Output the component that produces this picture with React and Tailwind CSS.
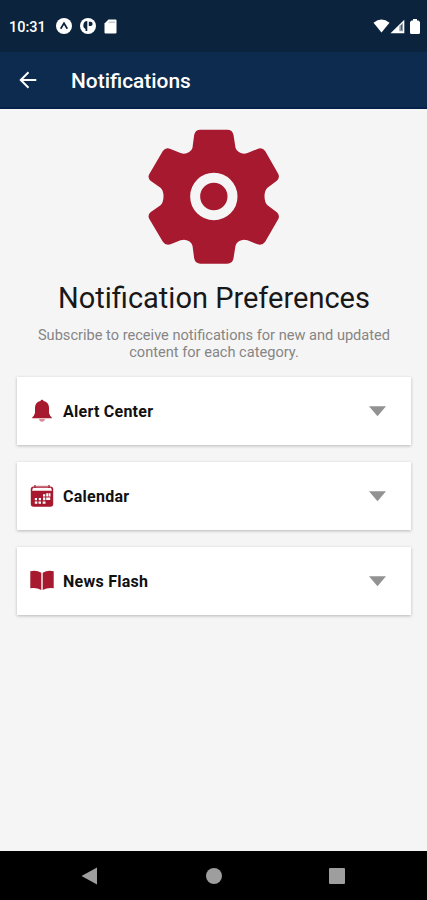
const categories = [
  { id: "alert", label: "Alert Center", icon: BellIcon },
  { id: "calendar", label: "Calendar", icon: CalendarIcon },
  { id: "news", label: "News Flash", icon: BookIcon }
];

function GearIcon() {
  return (
    <svg viewBox="-2.5 0 510 480" className="h-[160px] w-[170px]" aria-hidden="true">
      <path
        fill="#a6192e"
        d="M212 44H292Q308 44 311 60L317 98Q319 106 327 111Q339 119 353 114L383 102Q397 96 406 108L445 176Q451 188 441 197L413 218Q404 226 404 244Q404 262 413 271L441 292Q451 301 445 313L406 380Q397 393 383 388L353 376Q339 371 327 379Q319 384 317 392L311 430Q308 446 292 446H212Q196 446 193 430L188 392Q186 384 178 379Q166 371 152 376L122 388Q108 393 99 380L59 313Q52 301 62 292L92 271Q101 262 101 244Q101 226 92 218L62 197Q52 188 59 176L99 108Q108 96 122 102L152 114Q166 119 178 111Q186 106 188 98L193 60Q196 44 212 44Z"
      />
      <circle cx="252" cy="244.5" r="56" fill="none" stroke="#f5f5f5" strokeWidth="30" />
    </svg>
  );
}

function BellIcon() {
  return (
    <svg viewBox="0 0 24 24" className="size-6" aria-hidden="true">
      <path
        fill="#a6192e"
        d="M12 .7c-.9 0-1.400.6-1.500 1.300C7 2.700 5 5.200 5 8.500V14L3.700 17c-.9.600-1.500 1.100-1.500 2.200h19.600c0-1.100-.6-1.600-1.500-2.200L19 14V8.500c0-3.300-2-5.800-5.500-6.500C13.400 1.300 12.900.7 12 .7Z"
      />
      <path fill="#d98c97" d="M9 20h6c-.2 1.600-1.300 2.800-3 2.800S9.200 21.600 9 20Z" />
    </svg>
  );
}

function CalendarIcon() {
  return (
    <svg viewBox="0 0 24 24" className="size-6" aria-hidden="true">
      <rect x=".8" y="2.500" width="22.400" height="20.300" rx="2.800" fill="#a6192e" />
      <path fill="#fff" d="M3 3.800h18l1 3H2z" />
      <path stroke="#a6192e" strokeWidth="1.300" d="M5 1v3M19 1v3" />
      <path stroke="#c96c79" d="M5.500 2.300h13" />
      <path
        fill="#fff"
        d="M13 10.300h2.300v2.200H13zM16.200 9.300h2.300v3.200h-2.300zM19 9.300h1.500v3.200H19zM4.800 14h2.200v2.200H4.800zM8.800 14H11v2.200H8.800zM13 13.500h2.300v2.700H13zM16.200 13.500h4v2.500h-4zM4.800 17.500h2.500v2.200H4.800zM8.500 17.500H11v2.200H8.500zM12.700 17.500h2.800v2.200h-2.800z"
      />
    </svg>
  );
}

function BookIcon() {
  return (
    <svg viewBox="0 0 24 24" className="size-6" aria-hidden="true">
      <path
        fill="#a6192e"
        d="M.3 2.200Q6.500.8 11.300 3.700V21Q6.500 18.200.3 19.200ZM23.700 2.200Q17.500.8 12.700 3.700V21Q17.500 18.200 23.700 19.200Z"
      />
    </svg>
  );
}

function StatusBar() {
  return (
    <div className="flex h-[52px] items-center justify-between bg-[#0c233d] pr-[7px] pl-[9px] text-white">
      <div className="flex items-center">
        <span className="w-[47px] pt-[3px] text-[14.5px] font-medium">10:31</span>
        <svg viewBox="0 0 16 16" className="size-4" aria-hidden="true">
          <circle cx="8" cy="8" r="8" fill="#fff" />
          <path d="M4.700 10.700 8 5.200l3.300 5.500" fill="none" stroke="#0c233d" strokeWidth="1.700" />
        </svg>
        <svg viewBox="0 0 16 16" className="ml-2 size-4" aria-hidden="true">
          <circle cx="8" cy="8" r="8" fill="#fff" />
          <path d="M7.300 3v10H5.500V11Q3.300 10 3.300 8Q3.300 3 7.300 3Z" fill="#0c233d" />
          <path d="M8.800 3.800h1.700a2.100 2.100 0 0 1 0 4.200H8.800z" fill="#0c233d" />
        </svg>
        <svg viewBox="0 0 13 15" className="ml-2 h-[15px] w-[13px]" aria-hidden="true">
          <path d="M4.500.5h7Q12.500.5 12.500 1.500v12Q12.500 14.500 11.500 14.500H1.500Q.5 14.500.5 13.500V4.500Z" fill="#fff" />
          <path d="M4.500 3.200h6.500" stroke="#a9b1bc" />
        </svg>
      </div>
      <div className="flex items-center">
        <svg viewBox="0 0 17 14" className="h-[14px] w-[17px]" aria-hidden="true">
          <path d="M.5 3.800Q8.500-2.800 16.500 3.800L8.500 13.500Z" fill="#fff" />
        </svg>
        <svg viewBox="0 0 15 15" className="h-[15px] w-[15px]" aria-hidden="true">
          <path d="M14.300.7v13.600H.5Z" fill="#fff" />
          <path d="M9.300 7 13 4v8.200H9.300Z" fill="#8e99a6" />
          <path d="M11.500 6v5" stroke="#4c5a6c" />
        </svg>
        <svg viewBox="0 0 10 15" className="ml-[5px] h-[15px] w-[10px]" aria-hidden="true">
          <path d="M3 0h4v1.500h1.500L10 3v10.500Q10 15 8.500 15h-7Q0 15 0 13.500V3l1.500-1.500H3Z" fill="#fff" />
        </svg>
      </div>
    </div>
  );
}

function Header() {
  return (
    <header className="flex h-[57px] items-center border-b-2 border-[#05204a] bg-[#0c2b4e] pl-[19px] text-white">
      <button type="button" aria-label="Back">
        <svg viewBox="0 0 18 18" className="size-[18px]" fill="none" stroke="#fff" strokeWidth="2" aria-hidden="true">
          <path d="M17.300 9H2M9.500 1.300 1.800 9l7.700 7.700" />
        </svg>
      </button>
      <h1 className="ml-[34px] pt-[5px] text-[20.9px] font-medium">Notifications</h1>
    </header>
  );
}

function CategoryCard({ label, icon: Icon }) {
  return (
    <button
      type="button"
      className="flex h-[68px] w-full items-center bg-white pr-[25px] pl-[13px] shadow-[0_1px_3px_rgba(0,0,0,0.25)]"
    >
      <Icon />
      <span className="ml-[9px] pt-px text-[16px] font-bold tracking-[0.25px] text-[#111]">{label}</span>
      <svg viewBox="0 0 17 11" className="ml-auto h-[11px] w-[17px]" aria-hidden="true">
        <path d="M0 .2h17L8.500 10.200Z" fill="#929292" />
      </svg>
    </button>
  );
}

function NavigationBar() {
  return (
    <nav className="flex h-[49px] items-center bg-black pl-[81px]">
      <svg viewBox="0 0 17 18" className="h-[18px] w-[17px]" aria-hidden="true">
        <path d="M16 .5v17L.5 9Z" fill="#9e9e9e" />
      </svg>
      <span className="ml-[108px] size-[16px] rounded-full bg-[#9e9e9e]" />
      <span className="ml-[107px] size-[16px] rounded-[1px] bg-[#9e9e9e]" />
    </nav>
  );
}

function App() {
  return (
    <div className="flex h-[900px] w-[427px] flex-col overflow-hidden bg-[#f5f5f5] font-['Roboto',sans-serif]">
      <StatusBar />
      <Header />
      <main className="flex flex-1 flex-col items-center pt-[6px]">
        <GearIcon />
        <h2 className="mt-[3px] pl-px text-[29px] leading-10 whitespace-nowrap text-[#181818]">
          Notification Preferences
        </h2>
        <p className="mt-[9px] pl-px text-center text-[14.6px] leading-[17px] whitespace-nowrap text-[#858585]">
          Subscribe to receive notifications for new and updated
          <br />
          content for each category.
        </p>
        <div className="mt-4 flex w-full flex-col gap-[17px] pr-4 pl-[17px]">
          {categories.map((category) => (
            <CategoryCard key={category.id} label={category.label} icon={category.icon} />
          ))}
        </div>
      </main>
      <NavigationBar />
    </div>
  );
}

export default App;
